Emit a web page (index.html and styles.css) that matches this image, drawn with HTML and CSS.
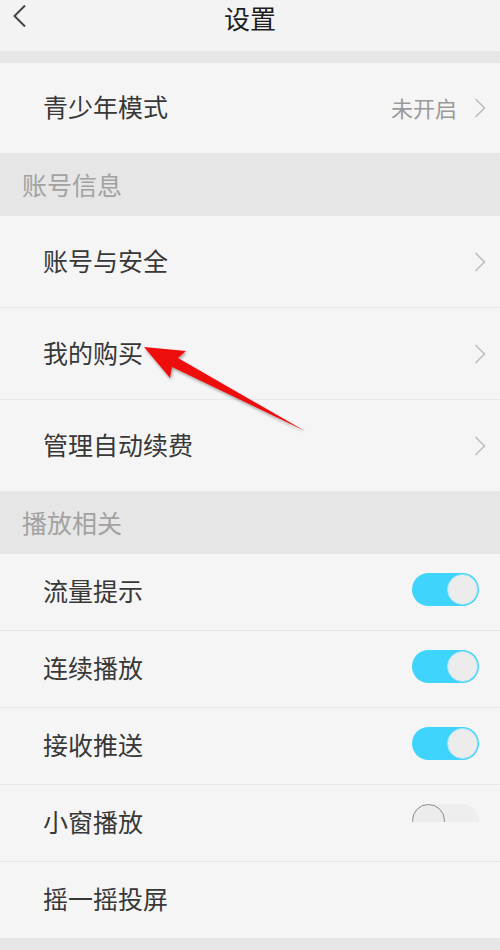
FILE: index.html
```html
<!DOCTYPE html>
<html lang="zh-CN">
<head>
<meta charset="utf-8">
<title>设置</title>
<link rel="stylesheet" href="styles.css">
</head>
<body>
<div class="page">
  <header class="topbar">
    <svg class="back" width="16" height="24" viewBox="0 0 16 24"><path d="M13 1.5 L2.5 12 L13 22.5" fill="none" stroke="#444" stroke-width="2"/></svg>
    <div class="title">设置</div>
  </header>
  <div class="gap"></div>
  <div class="row row-tall">
    <span class="label">青少年模式</span>
    <span class="right"><span class="value">未开启</span><svg class="chev" width="12" height="20" viewBox="0 0 12 20"><path d="M1.5 1 L10.5 10 L1.5 19" fill="none" stroke="#bdbdbd" stroke-width="1.6"/></svg></span>
  </div>
  <div class="section">账号信息</div>
  <div class="group">
    <div class="row row-mid"><span class="label">账号与安全</span><svg class="chev" width="12" height="20" viewBox="0 0 12 20"><path d="M1.5 1 L10.5 10 L1.5 19" fill="none" stroke="#bdbdbd" stroke-width="1.6"/></svg></div>
    <div class="row row-mid"><span class="label">我的购买</span><svg class="chev" width="12" height="20" viewBox="0 0 12 20"><path d="M1.5 1 L10.5 10 L1.5 19" fill="none" stroke="#bdbdbd" stroke-width="1.6"/></svg></div>
    <div class="row row-mid"><span class="label">管理自动续费</span><svg class="chev" width="12" height="20" viewBox="0 0 12 20"><path d="M1.5 1 L10.5 10 L1.5 19" fill="none" stroke="#bdbdbd" stroke-width="1.6"/></svg></div>
  </div>
  <div class="section">播放相关</div>
  <div class="group">
    <div class="row row-sm"><span class="label">流量提示</span><span class="toggle on"><span class="knob"></span></span></div>
    <div class="row row-sm"><span class="label">连续播放</span><span class="toggle on"><span class="knob"></span></span></div>
    <div class="row row-sm"><span class="label">接收推送</span><span class="toggle on"><span class="knob"></span></span></div>
    <div class="row row-sm"><span class="label">小窗播放</span><span class="clip"><span class="toggle off"><span class="knob"></span></span></span></div>
    <div class="row row-sm"><span class="label">摇一摇投屏</span></div>
  </div>
  <div class="footer"></div>
  <svg class="arrow" width="500" height="950" viewBox="0 0 500 950">
    <defs>
      <filter id="sh" x="-20%" y="-20%" width="140%" height="140%">
        <feGaussianBlur in="SourceAlpha" stdDeviation="1.5"/>
        <feOffset dx="1" dy="1.5" result="b"/>
        <feComponentTransfer><feFuncA type="linear" slope="0.35"/></feComponentTransfer>
        <feMerge><feMergeNode/><feMergeNode in="SourceGraphic"/></feMerge>
      </filter>
    </defs>
    <polygon filter="url(#sh)" fill="#ee1111" points="144,347 186,351 178,358 305,431 172,367 170,378"/>
  </svg>
</div>
</body>
</html>
```
FILE: styles.css
```css
html, body {
  margin: 0;
  padding: 0;
  background: #e6e6e6;
}
.page {
  position: relative;
  width: 500px;
  height: 950px;
  overflow: hidden;
  background: #e6e6e6;
  font-family: "Noto Sans CJK SC", "Noto Sans", sans-serif;
}
.topbar {
  height: 51px;
  background: #f3f3f3;
  display: flex;
  align-items: flex-start;
  justify-content: center;
  position: relative;
}
.back {
  position: absolute;
  left: 12px;
  top: 4px;
}
.title {
  font-size: 26px;
  color: #1e1e1e;
  line-height: 34px;
  padding-top: 1px;
}
.gap {
  height: 12px;
}
.row {
  display: flex;
  align-items: center;
  justify-content: space-between;
  background: #f5f5f5;
  padding: 0 14px 0 43px;
  box-sizing: border-box;
}
.group .row + .row {
  border-top: 1px solid #e9e9e9;
}
.row-tall { height: 90px; }
.row-mid { height: 91px; }
.group .row-mid + .row-mid { height: 92px; }
.row-sm { height: 76px; }
.group .row-sm + .row-sm { height: 77px; }
.label {
  font-size: 25px;
  color: #383838;
  line-height: 1;
  margin-top: -3px;
}
.right {
  display: flex;
  align-items: center;
  gap: 17px;
}
.value {
  font-size: 22px;
  color: #9a9a9a;
  line-height: 1;
  margin-top: -3px;
}
.chev {
  display: block;
}
.section {
  height: 63px;
  display: flex;
  align-items: center;
  padding-left: 22px;
  font-size: 25px;
  color: #a2a2a2;
  background: #e6e6e6;
  line-height: 1;
}
.toggle {
  display: block;
  width: 67px;
  height: 33px;
  border-radius: 17px;
  position: relative;
  box-sizing: border-box;
  margin-right: 7px;
  margin-top: -6px;
}
.toggle.on {
  background: #3ed4fc;
}
.toggle.off {
  background: #eeeeee;
  margin-top: 0;
}
.knob {
  position: absolute;
  top: 1px;
  width: 31px;
  height: 31px;
  border-radius: 50%;
  background: #ececec;
  box-sizing: border-box;
}
.toggle.on .knob {
  right: 1px;
  border: 1px solid #9fe3f5;
}
.toggle.off .knob {
  left: 0;
  top: 0;
  width: 33px;
  height: 33px;
  border: 1.5px solid #8a8a8a;
}
.clip {
  display: block;
  height: 18px;
  overflow: hidden;
  align-self: flex-start;
  margin-top: 19px;
}
.footer {
  height: 20px;
  background: #e6e6e6;
}
.arrow {
  position: absolute;
  left: 0;
  top: 0;
  pointer-events: none;
}
```
